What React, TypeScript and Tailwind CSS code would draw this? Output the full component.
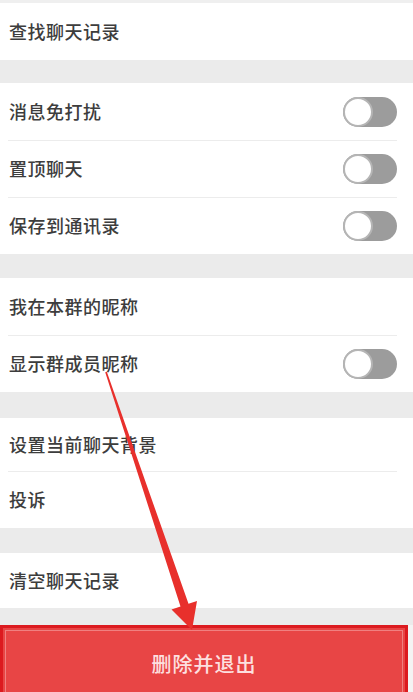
import React from 'react';

function Toggle() {
  return (
    <div className="w-[54px] h-[30px] rounded-full bg-[#9c9c9c] flex items-center">
      <div className="w-[30px] h-[30px] rounded-full bg-white border-[2px] border-[#b5b5b5]" />
    </div>
  );
}

function Row({ label, toggle, divider, h = 'h-[57px]' }: { label: string; toggle?: boolean; divider?: boolean; h?: string }) {
  return (
    <div className={`${h} bg-white pl-[9px] pr-[16px] relative flex items-center justify-between`}>
      {divider && <div className="absolute top-0 left-[8px] right-[16px] h-px bg-[#ececec]" />}
      <span className="text-[18px] font-medium text-[#3d3d3d] tracking-[0.5px]">{label}</span>
      {toggle && <Toggle />}
    </div>
  );
}

export default function App() {
  return (
    <div
      className="relative w-[413px] h-[692px] overflow-hidden bg-[#ebebeb]"
      style={{ fontFamily: '"Noto Sans CJK SC", "Noto Sans", sans-serif' }}
    >
      <div className="h-[3px] bg-[#efefef]" />
      <Row label="查找聊天记录" />
      <div className="h-[23px]" />
      <Row label="消息免打扰" toggle />
      <Row label="置顶聊天" toggle divider />
      <Row label="保存到通讯录" toggle divider h="h-[57px]" />
      <div className="h-[24px]" />
      <Row label="我在本群的昵称" />
      <Row label="显示群成员昵称" toggle divider />
      <div className="h-[26px]" />
      <Row label="设置当前聊天背景" h="h-[53px]" />
      <Row label="投诉" divider />
      <div className="h-[25px]" />
      <Row label="清空聊天记录" h="h-[55px]" />
      <div className="h-[17px]" />
      <div className="flex bg-[#f4f4f4]">
        <div className="w-[408px] h-[75px] border-[3px] border-[#dc1a1f] bg-[#e84545] p-[2px]">
          <div className="h-full border border-[#f08080] flex items-start justify-center pt-[18px]">
            <span className="text-[20px] font-medium text-[#fde0e0] tracking-[1px]">删除并退出</span>
          </div>
        </div>
      </div>
      <svg className="absolute inset-0 pointer-events-none" width="413" height="692" viewBox="0 0 413 692">
        <polygon
          points="106.8,371.8 188.5,603.8 197,601 192,630 171.5,609.4 180.5,606.4 105.2,372.3"
          fill="#e8302c"
        />
      </svg>
    </div>
  );
}
